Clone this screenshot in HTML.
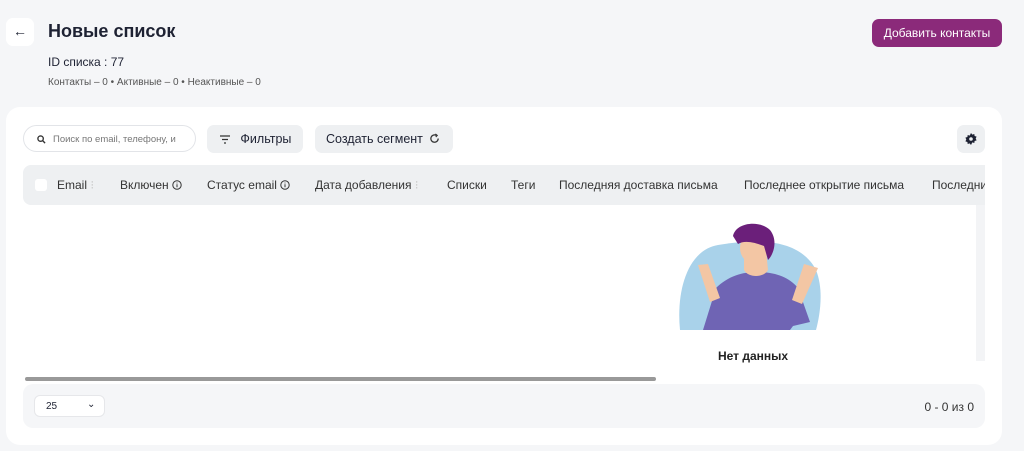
<!DOCTYPE html>
<html><head><meta charset="utf-8"><style>
*{box-sizing:border-box;margin:0;padding:0}
body{width:1024px;height:451px;background:#f5f6f8;font-family:"Liberation Sans",sans-serif;color:#1e2233;position:relative;overflow:hidden}
.abs{position:absolute}
.back{left:6px;top:18px;width:28px;height:28px;background:#fff;border-radius:7px;font-size:14px;text-align:center;line-height:27px}
h1{position:absolute;left:48px;top:21px;font-size:18px;font-weight:700}
.btnp{left:872px;top:19px;width:130px;height:28px;background:#8b2a7a;color:#fff;border-radius:7px;font-size:12px;text-align:center;line-height:28px}
.card{left:6px;top:107px;width:996px;height:338px;background:#fff;border-radius:14px}
.search{left:23px;top:125px;width:173px;height:27px;border:1px solid #e2e4e8;border-radius:14px;font-size:9.5px;color:#777;padding:8px 0 0 29px}
.gb{background:#eef0f2;border-radius:7px;height:28px;font-size:12.5px;line-height:28px;color:#1e2233}
.th{left:23px;top:165px;width:962px;height:40px;background:#eef0f2;border-radius:8px 0 0 8px;font-size:12px;color:#333}
.th .c{position:absolute;top:13px;white-space:nowrap;line-height:14px}
.th i{font-style:normal;color:#ccc}
.th svg{vertical-align:-1px}
.foot{left:23px;top:384px;width:962px;height:44px;background:#f5f6f8;border-radius:10px}
</style></head><body>
<div class="abs back">←</div>
<h1>Новые список</h1>
<div class="abs" style="left:48px;top:55px;font-size:12px">ID списка : 77</div>
<div class="abs" style="left:48px;top:77px;font-size:10px;color:#555">Контакты – 0 • Активные – 0 • Неактивные – 0</div>
<div class="abs btnp">Добавить контакты</div>
<div class="abs card"></div>
<div class="abs search"><svg class="abs" style="left:13px;top:9px" width="9" height="9" viewBox="0 0 10 10"><circle cx="4" cy="4" r="3" fill="none" stroke="#333" stroke-width="1.5"/><path d="M6 6l3 3" stroke="#333" stroke-width="1.5"/></svg>Поиск по email, телефону, и</div>
<div class="abs gb" style="left:207px;top:125px;width:96px;padding-left:13px"><svg width="10" height="9" viewBox="0 0 10 9" style="vertical-align:-1px"><path d="M0 1h10M2 4.5h6M4 8h2" stroke="#333" stroke-width="1.3"/></svg>&nbsp;&nbsp;&nbsp;Фильтры</div>
<div class="abs gb" style="left:315px;top:125px;width:138px;padding-left:11px">Создать сегмент <svg width="11" height="11" viewBox="0 0 12 12" style="vertical-align:-1px;margin-left:3px"><path d="M10 6a4 4 0 1 1-2-3.4" fill="none" stroke="#333" stroke-width="1.4"/><path d="M7 1l2 1.6-1.6 1.8" fill="none" stroke="#333" stroke-width="1.2"/></svg></div>
<div class="abs gb" style="left:957px;top:125px;width:28px"><svg class="abs" style="left:8px;top:8px" width="12" height="12" viewBox="0 0 12 12"><path d="M6 0l1.3 1.6 2-.6.3 2 2 .6-.9 1.9.9 1.9-2 .6-.3 2-2-.6L6 12 4.7 10.4l-2 .6-.3-2-2-.6.9-1.9-.9-1.9 2-.6.3-2 2 .6z" fill="#1e2233"/><circle cx="6" cy="6" r="1.8" fill="#eef0f2"/></svg></div>
<div class="abs th">
<span class="c" style="left:12px;top:14px;width:12px;height:12px;background:#fff;border-radius:3px"></span>
<span class="c" style="left:34px">Email <i>⁝</i></span>
<span class="c" style="left:97px">Включен <svg width="10" height="10" viewBox="0 0 10 10"><circle cx="5" cy="5" r="4.2" fill="none" stroke="#333"/><path d="M5 4.3v3M5 2.6v.8" stroke="#333"/></svg></span>
<span class="c" style="left:184px">Статус email <svg width="10" height="10" viewBox="0 0 10 10"><circle cx="5" cy="5" r="4.2" fill="none" stroke="#333"/><path d="M5 4.3v3M5 2.6v.8" stroke="#333"/></svg></span>
<span class="c" style="left:292px">Дата добавления <i>⁝</i></span>
<span class="c" style="left:424px">Списки</span>
<span class="c" style="left:488px">Теги</span>
<span class="c" style="left:536px">Последняя доставка письма</span>
<span class="c" style="left:721px">Последнее открытие письма</span>
<span class="c" style="left:909px;width:53px;overflow:hidden">Последний</span>
</div>
<div class="abs" style="left:976px;top:205px;width:9px;height:156px;background:#f3f4f6"></div>
<svg class="abs" style="left:678px;top:220px" width="146" height="112" viewBox="0 0 146 112">
<path d="M2 110 C-2 70 10 30 40 25 C70 20 120 15 138 50 C146 70 142 95 138 110Z" fill="#a9d2ea"/>
<path d="M25 110 L38 68 C50 56 65 52 78 52 C95 52 110 56 120 68 L132 102 L115 106 L112 110 Z" fill="#6f64b4"/>
<path d="M20 45 L32 82 L42 78 L30 44Z" fill="#f3c6a4"/>
<path d="M126 44 L114 80 L124 84 L140 48Z" fill="#f3c6a4"/>
<path d="M66 30 L66 50 C70 58 86 58 90 50 L88 30Z" fill="#f3c6a4"/>
<ellipse cx="75" cy="28" rx="13" ry="15" fill="#f3c6a4"/>
<path d="M55 16 C58 2 82 0 92 10 C100 20 96 34 90 40 L86 26 C76 22 66 20 60 24 Z" fill="#6b1f7a"/>
</svg>
<div class="abs" style="left:718px;top:349px;font-size:12px;font-weight:700;color:#222">Нет данных</div>
<div class="abs" style="left:25px;top:377px;width:631px;height:4px;background:#999;border-radius:2px"></div>
<div class="abs foot"></div>
<div class="abs" style="left:34px;top:395px;width:71px;height:22px;background:#fff;border:1px solid #e6e7ea;border-radius:6px;font-size:10px;padding:5px 0 0 11px">25<span style="position:absolute;left:52px;top:3px;font-size:10px">⌄</span></div>
<div class="abs" style="right:50px;top:400px;font-size:12px;color:#333">0 - 0 из 0</div>
</body></html>
